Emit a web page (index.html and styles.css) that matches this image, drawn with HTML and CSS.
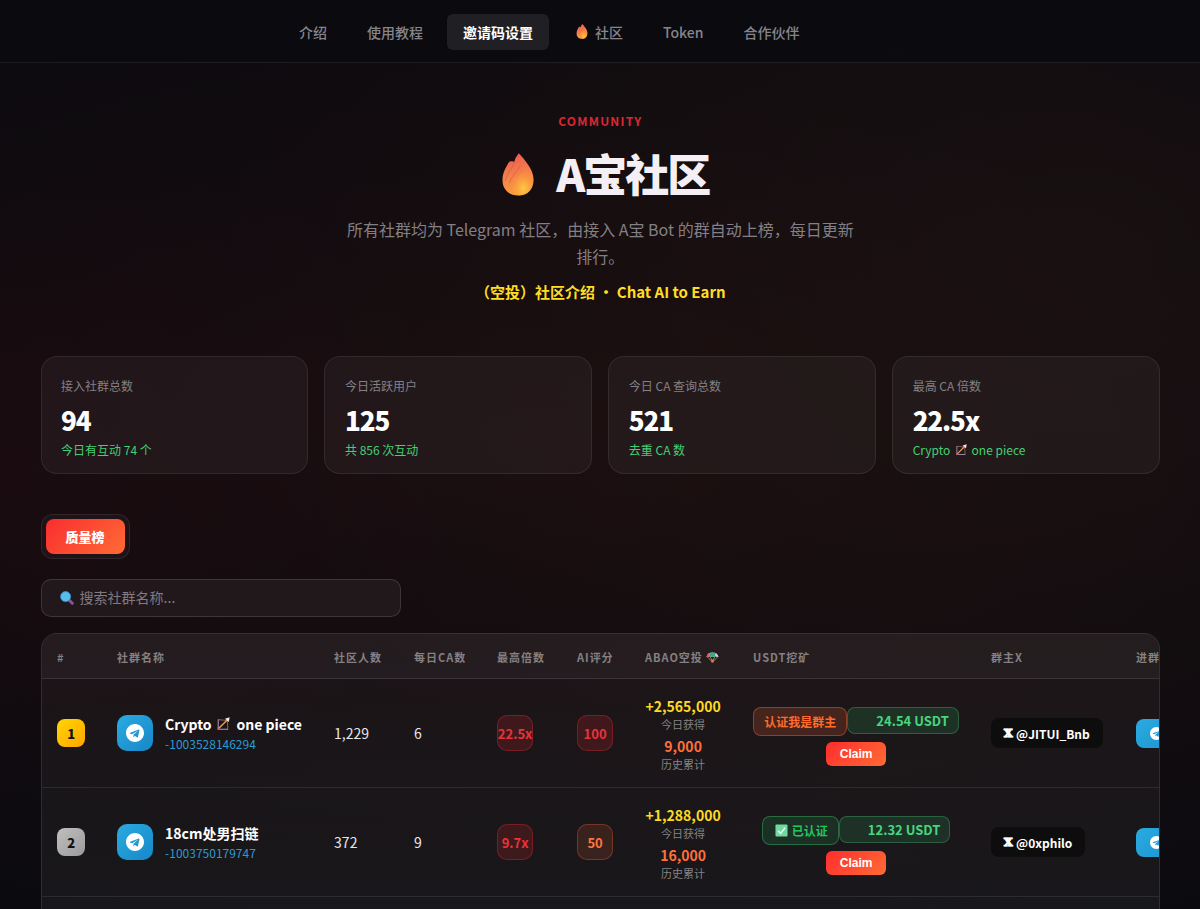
FILE: index.html
```html
<!DOCTYPE html>
<html lang="zh-CN">
<head>
    <meta charset="UTF-8">
    <meta name="viewport" content="width=device-width, initial-scale=1.0">
    <title>A宝社区</title>
    <link rel="stylesheet" href="styles.css">
</head>
<body>
    <!-- shared icons -->
    <svg class="sprite" width="0" height="0" aria-hidden="true">
        <defs>
            <linearGradient id="fireOuter" x1="0.4" y1="0" x2="0.6" y2="1">
                <stop offset="0" stop-color="#ef5a52"/>
                <stop offset="0.5" stop-color="#f4824a"/>
                <stop offset="1" stop-color="#fba23c"/>
            </linearGradient>
            <radialGradient id="fireInner" cx="0.55" cy="0.75" r="0.65">
                <stop offset="0" stop-color="#ffca40"/>
                <stop offset="1" stop-color="#f98a3f" stop-opacity="0.1"/>
            </radialGradient>
        </defs>
        <symbol id="fire" viewBox="0 0 32 43">
            <path d="M16.8 0.3C14.4 3.2 13 6 12.2 9C11.5 8.4 10.8 8 9.8 8.2C9 8 7.6 8.6 6.6 9.4C5 13 0.5 18.5 0.5 27C0.5 36.5 7 42.6 16.3 42.6C25.6 42.6 31.6 36.5 31.6 26.5C31.6 16.5 22.5 6.5 16.8 0.3Z" fill="url(#fireOuter)"/>
            <path d="M24 13C23 21 12 22.5 9.8 31C9 37 12 41 16.5 42.4C25.2 42.3 31 36.5 31 27C31 21 28 16.5 24 13Z" fill="url(#fireInner)"/>
            <path d="M12.2 9C11 15.5 5.5 18.5 3.6 27.5M18 12.5C16.5 18.5 9.5 21.5 7.6 30" fill="none" stroke="#d4573e" stroke-width="0.9" opacity="0.7"/>
        </symbol>
        <symbol id="bow" viewBox="0 0 16 16">
            <path d="M2.5 3L13 4L13.5 14.5" fill="none" stroke="#8a5a4c" stroke-width="1.3"/>
            <path d="M2.5 2.8V14H13.6" fill="none" stroke="#b79ec0" stroke-width="1.1"/>
            <path d="M3 13.2L12.5 3.7" stroke="#e8a45a" stroke-width="1.6"/>
            <path d="M10.2 2L15.6 0.2L14.7 5.6Z" fill="#f1e9ee"/>
            <path d="M2 11.5L4.6 14.2L1.6 15Z" fill="#c3566a"/>
        </symbol>
        <symbol id="telegram" viewBox="0 0 24 24">
            <path d="M12 0C5.37 0 0 5.37 0 12s5.37 12 12 12 12-5.37 12-12S18.63 0 12 0zm5.9 8.2l-1.97 9.28c-.15.66-.54.82-1.09.51l-3-2.21-1.45 1.4c-.16.16-.3.29-.6.29l.21-3.05 5.56-5.02c.24-.22-.05-.34-.37-.12L8.3 13.6l-2.96-.92c-.64-.2-.66-.64.14-.95l11.57-4.46c.53-.2 1 .13.85.93z" fill="#fff"/>
        </symbol>
        <symbol id="check" viewBox="0 0 14 14">
            <rect x="0.5" y="0.5" width="13" height="13" rx="1" fill="#6fd9a0"/>
            <path d="M3.2 7.3L6 10.1L11 3.9" fill="none" stroke="#eafff2" stroke-width="1.7"/>
        </symbol>
    </svg>

    <nav class="navbar">
        <a href="#">介绍</a>
        <a href="#">使用教程</a>
        <a href="#" class="active">邀请码设置</a>
        <a href="#"><svg class="nav-fire"><use href="#fire"/></svg>社区</a>
        <a href="#">Token</a>
        <a href="#">合作伙伴</a>
    </nav>

    <main class="container">
        <header class="hero">
            <div class="hero-label">COMMUNITY</div>
            <h1><svg class="hero-fire"><use href="#fire"/></svg>A宝社区</h1>
            <p class="hero-desc">所有社群均为 Telegram 社区，由接入 A宝 Bot 的群自动上榜，每日更新排行。</p>
            <a href="#" class="hero-link">（空投）社区介绍 · Chat AI to Earn</a>
        </header>

        <section class="stats">
            <div class="stat-card">
                <div class="stat-label">接入社群总数</div>
                <div class="stat-value">94</div>
                <div class="stat-sub">今日有互动 74 个</div>
            </div>
            <div class="stat-card">
                <div class="stat-label">今日活跃用户</div>
                <div class="stat-value">125</div>
                <div class="stat-sub">共 856 次互动</div>
            </div>
            <div class="stat-card">
                <div class="stat-label">今日 CA 查询总数</div>
                <div class="stat-value">521</div>
                <div class="stat-sub">去重 CA 数</div>
            </div>
            <div class="stat-card">
                <div class="stat-label">最高 CA 倍数</div>
                <div class="stat-value">22.5x</div>
                <div class="stat-sub">Crypto <svg class="bow"><use href="#bow"/></svg> one piece</div>
            </div>
        </section>

        <div class="tabs">
            <button class="tab active">质量榜</button>
        </div>

        <label class="search">
            <svg width="14" height="14" viewBox="0 0 14 14">
                <path d="M9 9L12.3 12.3" stroke="#8d4fa0" stroke-width="3" stroke-linecap="round"/>
                <circle cx="5.6" cy="5.6" r="5" fill="#5bbdec" stroke="#3b8fc4" stroke-width="0.8"/>
            </svg>
            <input type="text" placeholder="搜索社群名称...">
        </label>

        <div class="table-wrap">
            <table>
                <colgroup>
                    <col class="c-rank"><col class="c-name"><col class="c-people"><col class="c-ca"><col class="c-max">
                    <col class="c-ai"><col class="c-abao"><col class="c-usdt"><col class="c-owner"><col class="c-join">
                </colgroup>
                <thead>
                    <tr>
                        <th>#</th>
                        <th>社群名称</th>
                        <th>社区人数</th>
                        <th>每日CA数</th>
                        <th>最高倍数</th>
                        <th>AI评分</th>
                        <th>ABAO空投 <svg class="parachute" viewBox="0 0 14 12">
                            <path d="M1 5L7 11L13 5M4.5 5L7 11L9.5 5" fill="none" stroke="#b98a62" stroke-width="0.9"/>
                            <path d="M0.5 5.5C1 2 3.5 0.5 7 0.5S13 2 13.5 5.5L10 4.8L7 5.5L4 4.8Z" fill="#d9d9d9"/>
                            <path d="M0.5 5.5C1 3 2 1.8 3.8 1.1L4 4.8Z" fill="#e0564d"/>
                            <path d="M3.8 1.1C6 0.3 8 0.3 10.2 1.1L10 4.8L7 5.5L4 4.8Z" fill="#35a890"/>
                            <path d="M5.8 8.3H8.2V11.5H5.8Z" fill="#c88a4a"/>
                        </svg></th>
                        <th>USDT挖矿</th>
                        <th>群主X</th>
                        <th>进群</th>
                    </tr>
                </thead>
                <tbody>
                    <tr>
                        <td><span class="rank gold">1</span></td>
                        <td>
                            <div class="group">
                                <span class="avatar"><svg><use href="#telegram"/></svg></span>
                                <div>
                                    <div class="group-name">Crypto <svg class="bow"><use href="#bow"/></svg> one piece</div>
                                    <div class="group-id">-1003528146294</div>
                                </div>
                            </div>
                        </td>
                        <td>1,229</td>
                        <td>6</td>
                        <td><span class="score red">22.5x</span></td>
                        <td><span class="score red">100</span></td>
                        <td class="airdrop">
                            <div class="today">+2,565,000</div>
                            <div class="note">今日获得</div>
                            <div class="total">9,000</div>
                            <div class="note">历史累计</div>
                        </td>
                        <td class="mining">
                            <div class="mining-row">
                                <span class="verify">认证我是群主</span>
                                <span class="amount">24.54 USDT</span>
                            </div>
                            <button class="claim">Claim</button>
                        </td>
                        <td><a href="#" class="owner"><span>𝕏</span>@JITUI_Bnb</a></td>
                        <td><a href="#" class="join"><svg><use href="#telegram"/></svg></a></td>
                    </tr>
                    <tr>
                        <td><span class="rank silver">2</span></td>
                        <td>
                            <div class="group">
                                <span class="avatar"><svg><use href="#telegram"/></svg></span>
                                <div>
                                    <div class="group-name">18cm处男扫链</div>
                                    <div class="group-id">-1003750179747</div>
                                </div>
                            </div>
                        </td>
                        <td>372</td>
                        <td>9</td>
                        <td><span class="score red">9.7x</span></td>
                        <td><span class="score orange">50</span></td>
                        <td class="airdrop">
                            <div class="today">+1,288,000</div>
                            <div class="note">今日获得</div>
                            <div class="total">16,000</div>
                            <div class="note">历史累计</div>
                        </td>
                        <td class="mining">
                            <div class="mining-row">
                                <span class="verify done"><svg><use href="#check"/></svg>已认证</span>
                                <span class="amount">12.32 USDT</span>
                            </div>
                            <button class="claim">Claim</button>
                        </td>
                        <td><a href="#" class="owner"><span>𝕏</span>@0xphilo</a></td>
                        <td><a href="#" class="join"><svg><use href="#telegram"/></svg></a></td>
                    </tr>
                    <tr class="next"><td colspan="10"></td></tr>
                </tbody>
            </table>
        </div>
    </main>
</body>
</html>
```

FILE: styles.css
```css
* { box-sizing: border-box; margin: 0; padding: 0; }
body {
    font-family: "Noto Sans CJK SC", "Noto Sans", sans-serif;
    height: 909px;
    overflow: hidden;
    color: #fff;
    background:
        radial-gradient(ellipse 480px 360px at 0 470px, rgba(255, 20, 50, 0.03), transparent),
        radial-gradient(ellipse 1250px 560px at 45% 440px, rgba(255, 60, 30, 0.06), transparent),
        radial-gradient(ellipse 900px 700px at 90% 260px, rgba(255, 140, 53, 0.035), transparent),
        #0a0a0f;
}
a { text-decoration: none; color: inherit; }
.sprite { position: absolute; }
.navbar {
    display: flex;
    align-items: center;
    gap: 8px;
    height: 63px;
    padding: 1px 0 0 283px;
    background: rgba(10, 10, 15, 0.85);
    border-bottom: 1px solid rgba(255, 255, 255, 0.08);
}
.navbar a {
    display: flex;
    align-items: center;
    height: 36px;
    padding: 0 16px;
    font-size: 14px;
    font-weight: 500;
    color: #85858b;
    border-radius: 6px;
}
.navbar a.active { background: #1f1f24; color: #fff; font-weight: 700; }
.nav-fire { width: 12px; height: 15px; margin: 0 7px 0 3px; }

.container { width: 1119.4px; margin-left: 40.6px; }
.hero { text-align: center; padding-top: 48px; height: 293px; }
.hero-label {
    font-size: 12px;
    line-height: 20px;
    font-weight: 700;
    letter-spacing: 1.2px;
    color: #dc2733;
}
h1 {
    display: flex;
    justify-content: center;
    align-items: center;
    margin-top: 11px;
    height: 61px;
    padding-left: 11px;
    font-size: 44px;
    font-weight: 900;
    letter-spacing: -2px;
    color: #f4eff4;
}
.hero-fire { width: 32px; height: 43px; margin: 3px 22px 0 0; }
.hero-desc {
    width: 520px;
    margin: 13px auto 0;
    font-size: 16px;
    line-height: 27px;
    color: #838085;
}
.hero-link {
    display: inline-block;
    margin-top: 10px;
    font-size: 15px;
    line-height: 24px;
    font-weight: 700;
    color: #ffdd22;
}

.stats { display: grid; grid-template-columns: repeat(4, 1fr); gap: 16px; }
.stat-card {
    height: 118px;
    padding: 19px 19.5px;
    border: 1px solid rgba(255, 255, 255, 0.08);
    border-radius: 16px;
    background: rgba(255, 255, 255, 0.045);
}
.stat-label { font-size: 12px; line-height: 20px; color: #848085; }
.stat-value { margin-top: 7px; font-size: 26px; line-height: 33px; font-weight: 900; letter-spacing: -1.1px; }
.stat-sub { margin-top: 4px; font-size: 12px; line-height: 20px; color: #43cf75; }
.bow { width: 1em; height: 1em; margin: 0 0.2em 0 0.12em; vertical-align: -0.12em; }

.tabs {
    width: fit-content;
    margin-top: 40px;
    padding: 4px;
    border: 1px solid rgba(255, 255, 255, 0.08);
    border-radius: 12px;
    background: rgba(255, 255, 255, 0.03);
}
.tab {
    display: block;
    height: 35px;
    padding: 0 20px;
    border: none;
    border-radius: 8px;
    font: 900 13px "Noto Sans CJK SC", sans-serif;
    color: #fff;
    background: linear-gradient(135deg, #f92d30, #ff6b35);
}
.search {
    display: flex;
    align-items: center;
    gap: 6px;
    width: 360px;
    height: 38px;
    margin-top: 20px;
    padding-left: 18px;
    border: 1px solid rgba(255, 255, 255, 0.13);
    border-radius: 10px;
    background: rgba(255, 255, 255, 0.05);
}
.search input {
    flex: 1;
    margin-top: -2px;
    border: none;
    outline: none;
    background: none;
    font: 14px "Noto Sans CJK SC", sans-serif;
    color: #fff;
}
.search input::placeholder { color: #807b82; }

.table-wrap {
    height: 300px;
    margin-top: 16px;
    overflow: hidden;
    border: 1px solid rgba(255, 255, 255, 0.1);
    border-radius: 16px;
    background: linear-gradient(rgba(255, 250, 240, 0.035), rgba(240, 245, 215, 0.06));
}
table { width: 1200px; margin-left: -0.5px; table-layout: fixed; border-collapse: separate; border-spacing: 0; }
.c-rank { width: 60px; }
.c-name { width: 217px; }
.c-people { width: 80px; }
.c-ca { width: 83px; }
.c-max { width: 80px; }
.c-ai { width: 68px; }
.c-abao { width: 108px; }
.c-usdt { width: 238px; }
.c-owner { width: 145px; }
.c-join { width: 121px; }
th {
    height: 45px;
    padding: 1px 0 0 16px;
    text-align: left;
    white-space: nowrap;
    font-size: 11px;
    font-weight: 700;
    letter-spacing: 0.95px;
    color: #858082;
    background: rgba(255, 255, 255, 0.035);
    border-bottom: 1px solid rgba(255, 255, 255, 0.1);
}
td {
    height: 109px;
    padding: 0 0 0 16px;
    font-size: 14px;
    vertical-align: middle;
    color: #e8e8ea;
    border-bottom: 1px solid rgba(255, 255, 255, 0.09);
}
.parachute { width: 13px; height: 11px; vertical-align: -1px; }
.rank {
    display: flex;
    align-items: center;
    justify-content: center;
    width: 28px;
    height: 28px;
    border-radius: 8px;
    font-size: 13px;
    font-weight: 900;
    color: #111;
}
.gold { background: linear-gradient(135deg, #ffd700, #ffa500); }
.silver { background: linear-gradient(135deg, #c0c0c0, #9a9a9a); }
.group { display: flex; align-items: center; gap: 12px; }
.avatar {
    display: flex;
    align-items: center;
    justify-content: center;
    width: 36px;
    height: 36px;
    border-radius: 10px;
    background: linear-gradient(135deg, #2aabe0, #1787c8);
}
.avatar svg { width: 18px; height: 18px; }
.group-name { font-size: 14px; line-height: 20px; font-weight: 700; color: #fff; white-space: nowrap; }
.group-id { font-size: 12px; line-height: 19px; color: #2a9bd0; }
.score {
    display: flex;
    align-items: center;
    justify-content: center;
    width: 36px;
    height: 36px;
    border: 1px solid;
    border-radius: 10px;
    font-size: 13px;
    font-weight: 700;
}
.red { color: #e8333b; background: rgba(255, 45, 45, 0.16); border-color: rgba(255, 45, 60, 0.3); }
.orange { color: #ff7640; background: rgba(255, 107, 53, 0.14); border-color: rgba(255, 107, 53, 0.3); }
.airdrop, .mining { padding: 0 16px; text-align: center; }
.today, .total { font-size: 14px; line-height: 22px; font-weight: 700; }
.today { color: #ffd923; }
.total { color: #ff7038; }
.note { font-size: 11px; line-height: 14px; color: #838383; }
.note + .total { margin-top: 4px; }
.mining { padding-top: 6px; }
.mining-row { display: flex; justify-content: center; }
.verify, .amount {
    display: flex;
    align-items: center;
    border: 1px solid;
    border-radius: 8px;
    white-space: nowrap;
    font-weight: 700;
}
.verify {
    height: 29px;
    padding: 0 10px;
    font-size: 12px;
    color: #ff6b2c;
    background: rgba(255, 107, 53, 0.18);
    border-color: rgba(255, 107, 53, 0.4);
}
.verify svg { width: 13px; height: 13px; margin: 0 4px 0 2px; }
.verify.done { color: #22c55e; background: rgba(34, 197, 94, 0.15); border-color: rgba(60, 200, 110, 0.4); }
.amount {
    height: 27px;
    padding: 0 9px 0 28px;
    font-size: 13px;
    color: #46d67f;
    background: rgba(50, 210, 120, 0.14);
    border-color: rgba(80, 210, 130, 0.3);
}
.claim {
    display: block;
    width: 60px;
    height: 24px;
    margin: 6px auto 0;
    border: none;
    border-radius: 6px;
    font: 700 12px "Liberation Sans", Arial, sans-serif;
    color: #fff;
    background: linear-gradient(135deg, #ff2d2d, #ff6b35);
}
.owner {
    display: inline-flex;
    align-items: center;
    height: 30px;
    padding: 0 13px;
    border-radius: 8px;
    font-size: 12px;
    font-weight: 700;
    color: #fff;
    background: #0e0d0d;
}
.owner span { width: 12px; font: 700 11px "DejaVu Serif", serif; -webkit-text-stroke: 0.7px #fff; }
.join {
    display: flex;
    align-items: center;
    width: 74px;
    height: 29px;
    padding-left: 14px;
    border-radius: 8px;
    background: linear-gradient(135deg, #2aabe0, #1787c8);
}
.join svg { width: 13px; height: 13px; }
```
